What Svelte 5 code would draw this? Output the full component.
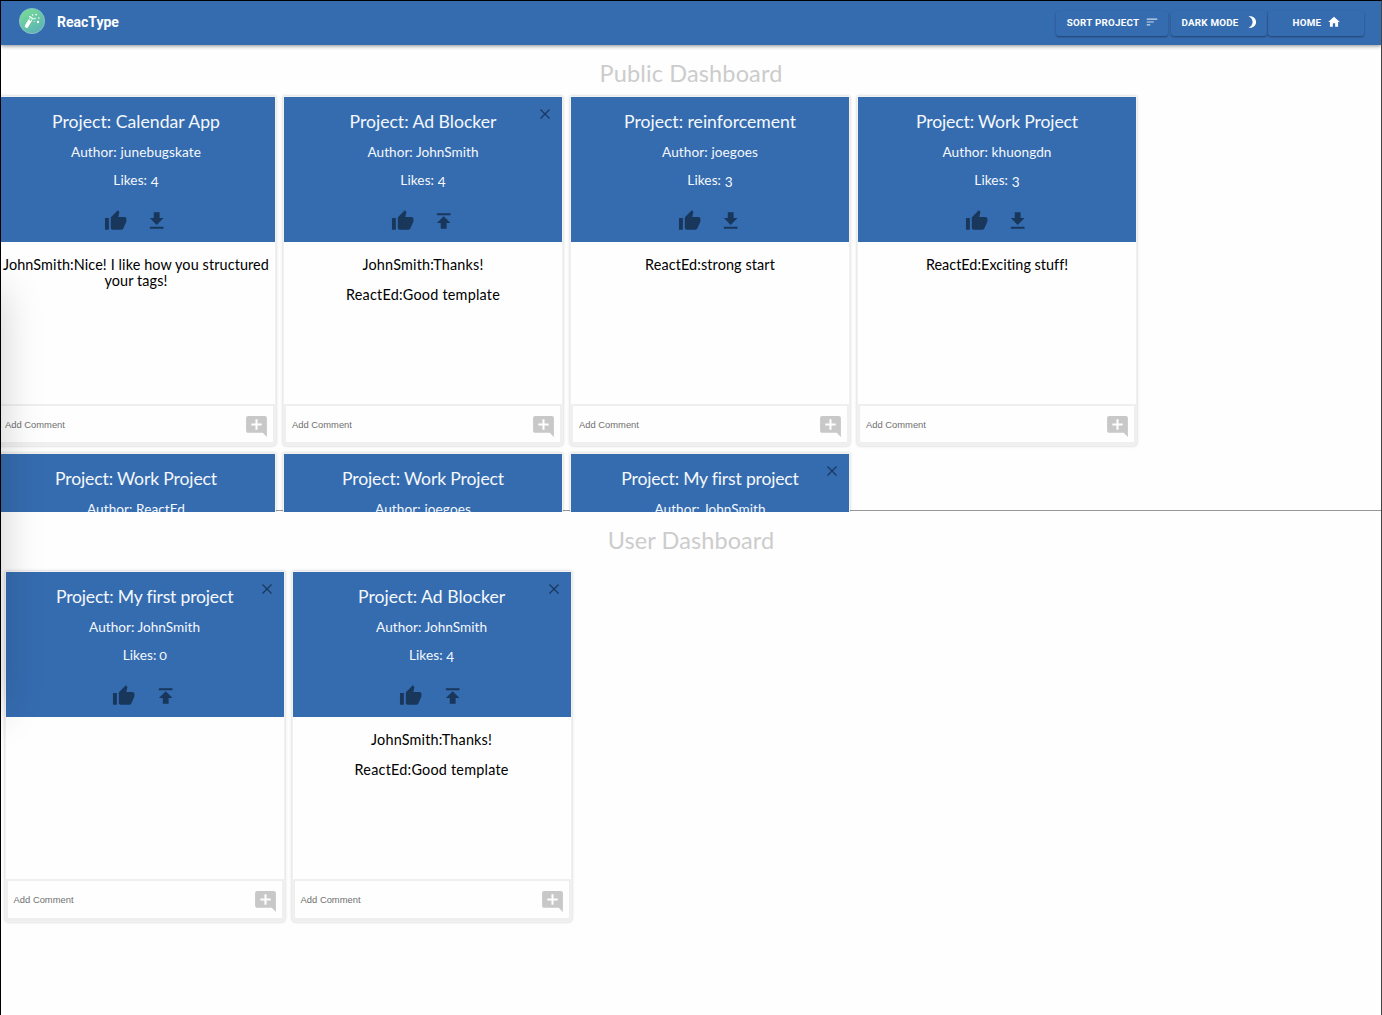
<script>
  const thumb = 'M1 21h4V9H1v12zm22-11c0-1.1-.9-2-2-2h-6.31l.95-4.57.03-.32c0-.41-.17-.79-.44-1.06L14.17 1 7.59 7.59C7.22 7.95 7 8.45 7 9v10c0 1.1.9 2 2 2h9c.83 0 1.54-.5 1.84-1.22l3.02-7.05c.09-.23.14-.47.14-.73v-2z';
  const download = 'M19 9h-4V3H9v6H5l7 7 7-7zM5 18v2h14v-2H5z';
  const publish = 'M5 4v2h14V4H5zm0 10h4v6h6v-6h4l-7-7-7 7z';
  const addComment = 'M21.99 4c0-1.1-.89-2-1.99-2H4c-1.1 0-2 .9-2 2v12c0 1.1.9 2 2 2h14l4 4-.01-18zM17 11h-4v4h-2v-4H7V9h4V5h2v4h4v2z';
  const sort = 'M3 18h6v-2H3v2zM3 6v2h18V6H3zm0 7h12v-2H3v2z';
  const moon = 'M9 2c-1.05 0-2.05.16-3 .46 4.06 1.27 7 5.06 7 9.54s-2.94 8.27-7 9.54c.95.3 1.95.46 3 .46 5.52 0 10-4.48 10-10S14.52 2 9 2z';
  const home = 'M10 20v-6h4v6h5v-8h3L12 3 2 12h3v8z';

  // Each label is a [text, measure] pair; the measure is its set width in pixels.
  const johnSmith = ['Author: JohnSmith', 111];
  const adBlocker = {
    title: ['Project: Ad Blocker', 147], author: johnSmith, likes: 4, own: true,
    comments: [[['JohnSmith:Thanks!', 121]], [['ReactEd:Good template', 154]]]
  };
  const firstProject = { title: ['Project: My first project', 177], author: johnSmith, likes: 0, own: true, comments: [] };
  const work = ['Project: Work Project', 162];

  const publicProjects = [
    { title: ['Project: Calendar App', 168], author: ['Author: junebugskate', 130], likes: 4,
      comments: [[['JohnSmith:Nice! I like how you structured', 266], ['your tags!', 63]]] },
    adBlocker,
    { title: ['Project: reinforcement', 172], author: ['Author: joegoes', 96], likes: 3, comments: [[['ReactEd:strong start', 130]]] },
    { title: work, author: ['Author: khuongdn', 109], likes: 3, comments: [[['ReactEd:Exciting stuff!', 142]]] },
    { title: work, author: ['Author: ReactEd', 98], comments: [], cropped: true },
    { title: work, author: ['Author: joegoes', 96], comments: [], cropped: true },
    { ...firstProject, cropped: true }
  ];
  const userProjects = [firstProject, adBlocker];

  // Tracks a label out or in until it fills its measure.
  function fit(node, width) {
    const natural = node.getBoundingClientRect().width;
    const step = (width - natural) / node.textContent.length;
    node.style.letterSpacing = `${step}px`;
  }
</script>

{#snippet icon(d, cls)}
  <svg class={cls} viewBox="0 0 24 24" aria-hidden="true"><path {d} /></svg>
{/snippet}

{#snippet card(p)}
  <article class="card">
    <header class="card-head">
      <h2><span class="fit" use:fit={p.title[1]}>{p.title[0]}</span></h2>
      <p class="meta"><span class="fit" use:fit={p.author[1]}>{p.author[0]}</span></p>
      {#if !p.cropped}
        <p class="meta likes">Likes: <span class="digit" class:low={p.likes > 2} class:small={p.likes === 0}>{p.likes}</span></p>
        <div class="actions">
          {@render icon(thumb, 'act')}
          {@render icon(p.own ? publish : download, 'act')}
        </div>
      {/if}
      {#if p.own}
        <svg class="close" viewBox="0 0 10 10" aria-hidden="true"><path d="M.5 .5 9.5 9.5M9.5 .5 .5 9.5" /></svg>
      {/if}
    </header>
    {#if !p.cropped}
      <div class="comments">
        {#each p.comments as lines}
          <p>
            {#each lines as line}
              <span class="line"><span class="fit" use:fit={line[1]}>{line[0]}</span></span>
            {/each}
          </p>
        {/each}
      </div>
      <footer class="add">
        <span>Add Comment</span>
        {@render icon(addComment, 'add-icon')}
      </footer>
    {/if}
  </article>
{/snippet}

<div class="app">
  <nav>
    <svg class="logo" viewBox="0 0 26 26" aria-hidden="true">
      <defs>
        <linearGradient id="lg" x1="0.2" y1="0" x2="0.8" y2="1">
          <stop offset="0" stop-color="#75dd94" />
          <stop offset="1" stop-color="#5cb0b8" />
        </linearGradient>
      </defs>
      <circle cx="13" cy="13" r="12.6" fill="url(#lg)" stroke="#8fc4cf" stroke-width=".8" />
      <path d="M11.6 11.6 7.6 18" stroke="#fff" stroke-width="3.6" stroke-linecap="round" />
      <path d="M12.3 10.2 10.9 12.5" stroke="#6fd09a" stroke-width="2" />
      <path d="M10.6 8.6 14.2 10.8" stroke="#fff" stroke-width="1.2" stroke-linecap="round" />
      <g fill="#fff">
        <circle cx="13.6" cy="7" r=".8" /><circle cx="17.2" cy="6.6" r=".9" />
        <circle cx="16" cy="10.6" r=".8" /><circle cx="19.8" cy="10" r=".8" />
        <circle cx="19" cy="14" r="1.2" /><circle cx="15.2" cy="13.3" r=".5" />
      </g>
    </svg>
    <span class="brand">ReacType</span>
    <div class="buttons">
      <button class="sort">SORT PROJECT {@render icon(sort, 'nav-icon faded')}</button>
      <button class="dark">DARK MODE {@render icon(moon, 'nav-icon')}</button>
      <button class="home">HOME {@render icon(home, 'nav-icon')}</button>
    </div>
  </nav>

  <section class="public">
    <h1><span class="fit" use:fit={183}>Public Dashboard</span></h1>
    <div class="rule"></div>
    <div class="grid">
      {#each publicProjects as p}{@render card(p)}{/each}
    </div>
  </section>

  <section class="user">
    <h1><span class="fit" use:fit={166.5}>User Dashboard</span></h1>
    <div class="grid">
      {#each userProjects as p}{@render card(p)}{/each}
    </div>
  </section>

  <div class="drawer-shade"></div>
</div>

<style>
  .app {
    position: relative;
    box-sizing: border-box;
    height: 1015px;
    overflow: hidden;
    border: solid #000;
    border-width: 1px 1px 0 1px;
    border-right-color: #444;
    background: #fefefe;
    font-family: Lato, "Open Sans", sans-serif;
    color: #000;
  }
  h1, h2, p { margin: 0; font-weight: 400; }
  .fit { display: inline-block; white-space: nowrap; }

  nav {
    position: relative;
    z-index: 2;
    display: flex;
    align-items: center;
    height: 44px;
    box-sizing: border-box;
    padding: 0 17px 0 18px;
    background: #356cb0;
    box-shadow: 0 1px 4px rgba(0, 0, 0, .45);
    font-family: Roboto, sans-serif;
    color: #fff;
  }
  .logo { width: 26px; height: 26px; margin-top: -4px; fill: none; }
  .brand { margin: -3px 0 0 12px; font-size: 14px; font-weight: 700; letter-spacing: 0; }
  .buttons { display: flex; margin-left: auto; }
  button {
    display: flex;
    align-items: center;
    justify-content: center;
    box-sizing: border-box;
    height: 25px;
    padding: 0 0 2px 2px;
    border: 0;
    border-radius: 3px;
    background: #356cb0;
    box-shadow: 0 1px 2px rgba(0, 0, 0, .4);
    color: #fff;
    font: 700 9.8px Roboto, sans-serif;
    letter-spacing: .25px;
  }
  .sort { width: 112px; margin-right: 3px; }
  .dark { width: 96px; margin-right: 1px; }
  .home { width: 96px; }
  .nav-icon { width: 14px; height: 14px; margin-left: 6px; fill: #fff; }
  .faded { opacity: .75; }

  section { position: relative; }
  .public { height: 467px; overflow: hidden; }
  h1 {
    height: 52px;
    box-sizing: border-box;
    padding-top: 14px;
    text-align: center;
    font-size: 23.5px;
    line-height: 28px;
    color: #ccc;
  }
  .user h1 { height: 60px; }
  .rule { position: absolute; left: 0; right: 0; bottom: 1px; height: 1px; background: #999; }
  .grid { position: relative; display: flex; flex-wrap: wrap; gap: 9px; width: 1145px; margin-left: -4px; }
  .user .grid { margin-left: 4.6px; }

  .card {
    display: flex;
    flex-direction: column;
    width: 278px;
    height: 348px;
    border-radius: 0 0 3px 3px;
    background: #fefefe;
    box-shadow: 0 0 0 1px #f1f1f1, 0 0 3px 1px rgba(0, 0, 0, .22);
  }
  .user .card { height: 349px; }
  .card-head {
    position: relative;
    box-sizing: border-box;
    height: 145px;
    padding-top: 13px;
    background: #356cb0;
    color: #fff;
    text-align: center;
  }
  h2 { font-size: 17.6px; line-height: 24px; margin-bottom: 10px; color: #f4f8fc; }
  .meta { font-size: 13.6px; line-height: 16px; margin-bottom: 12px; color: #f4f8fc; }
  .likes { letter-spacing: .1px; }
  .digit { display: inline-block; line-height: 12px; }
  .low { vertical-align: -2px; }
  .small { font-size: 11px; transform: scaleX(1.2); }
  .actions { display: flex; justify-content: center; gap: 18px; padding: 9px 0 0; }
  .act { width: 23.4px; height: 24px; fill: #19365b; }
  .close { position: absolute; top: 11.5px; right: 12px; width: 10px; height: 10px; stroke: #19365b; stroke-width: 1.2; fill: none; }

  .comments { flex: 1; padding-top: 15px; text-align: center; font-size: 14.4px; line-height: 16px; }
  .comments p { margin-bottom: 14px; }
  .line { display: block; height: 16px; }
  .add {
    display: flex;
    align-items: center;
    justify-content: space-between;
    box-sizing: border-box;
    height: 42px;
    padding: 0 4px 0 6px;
    border: solid #efefef;
    border-width: 2px 2px 3px;
    font: 9.4px "Liberation Sans", sans-serif;
    color: #707070;
  }
  .public .add { height: 41px; }
  .add-icon { width: 25px; height: 25px; margin-top: 4px; fill: #c8c8c8; }

  .drawer-shade {
    position: absolute;
    z-index: 3;
    left: -50px;
    top: 290px;
    width: 48px;
    height: 420px;
    box-shadow: 0 0 44px rgba(0, 0, 0, .21);
    pointer-events: none;
  }
</style>
